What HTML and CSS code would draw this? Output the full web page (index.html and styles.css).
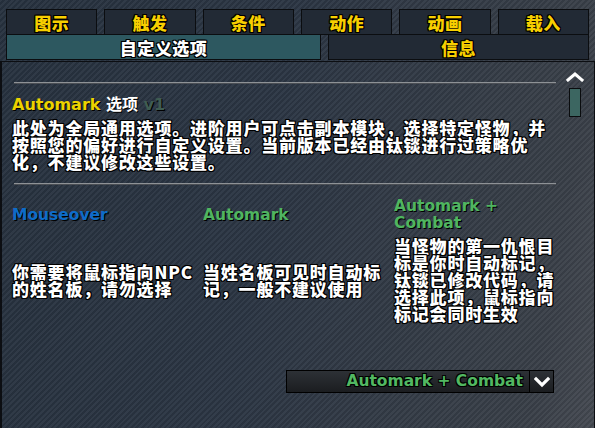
FILE: index.html
```html
<!DOCTYPE html>
<html>
<head>
<meta charset="utf-8">
<link rel="stylesheet" href="styles.css">
</head>
<body>
<div class="tabs top">
  <div class="tab">图示</div>
  <div class="tab">触发</div>
  <div class="tab">条件</div>
  <div class="tab">动作</div>
  <div class="tab">动画</div>
  <div class="tab">载入</div>
</div>
<div class="tabs sub">
  <div class="tab active">自定义选项</div>
  <div class="tab">信息</div>
</div>
<div class="panel">
  <div class="content">
    <div class="sep first"></div>
    <div class="title"><span class="yellow">Automark</span> 选项 <span class="ver">v1</span></div>
    <p class="desc">此处为全局通用选项。进阶用户可点击副本模块，选择特定怪物，并按照您的偏好进行自定义设置。当前版本已经由钛锬进行过策略优化，不建议修改这些设置。</p>
    <div class="sep"></div>
    <div class="grid">
      <div class="head blue">Mouseover</div>
      <div class="head green">Automark</div>
      <div class="head green">Automark + Combat</div>
      <div class="cell">你需要将鼠标指向NPC的姓名板，请勿选择</div>
      <div class="cell">当姓名板可见时自动标记，一般不建议使用</div>
      <div class="cell">当怪物的第一仇恨目标是你时自动标记，钛锬已修改代码，请选择此项，鼠标指向标记会同时生效</div>
    </div>
    <div class="dropdown">
      <div class="dd-value">Automark + Combat</div>
      <div class="dd-btn">
        <svg width="16" height="12" viewBox="0 0 16 12"><polyline points="2,3 8,9 14,3" fill="none" stroke="#fff" stroke-width="3.2" stroke-linecap="square"/></svg>
      </div>
    </div>
  </div>
  <div class="scroll">
    <svg class="up" width="18" height="10" viewBox="0 0 18 10"><polyline points="2,8 9,2 16,8" fill="none" stroke="#fff" stroke-width="3" stroke-linecap="square"/></svg>
    <div class="thumb"></div>
  </div>
</div>
</body>
</html>
```

FILE: styles.css
```css
html, body {
  margin: 0;
  padding: 0;
}
body {
  width: 595px;
  height: 428px;
  overflow: hidden;
  font-family: "DejaVu Sans", "Noto Sans CJK SC", sans-serif;
  font-weight: bold;
  color: #fff;
  background:
    repeating-linear-gradient(135deg, rgba(255,255,255,0.035) 0 2px, rgba(0,0,0,0.07) 2px 4px),
    linear-gradient(100deg, #27323f 0%, #2c3644 45%, #3a4049 90%, #454a52 100%);
}
.tabs {
  display: grid;
  margin-left: 6px;
  width: 583px;
}
.tabs.top {
  grid-template-columns: repeat(6, 1fr);
  column-gap: 7px;
  padding-top: 9px;
}
.tabs.sub {
  grid-template-columns: 315px 261px;
  column-gap: 7px;
  margin-top: -1px;
}
.tab {
  height: 24px;
  border: 1px solid #0b0d10;
  background: #222a35;
  color: #f7cf00;
  font-family: "Noto Sans CJK SC", sans-serif;
  font-weight: 900;
  font-size: 17px;
  letter-spacing: 0.5px;
  display: flex;
  align-items: center;
  justify-content: center;
  text-shadow: 1px 1px 0 #000, -1px -1px 0 #000, 1px -1px 0 #000, -1px 1px 0 #000, 0 1px 0 #000, 1px 0 0 #000, 0 -1px 0 #000, -1px 0 0 #000;
}
.tab.active {
  background: #2d5860;
  color: #fff;
}
.panel {
  margin-top: 1px;
  width: 592px;
  height: 366px;
  border: 1px solid #0c0e12;
  border-bottom: none;
  border-left-width: 2px;
  display: flex;
}
.content {
  width: 544px;
  padding-left: 10px;
  display: flex;
  flex-direction: column;
}
.sep {
  margin-left: 2px;
  border-top: 1px solid #8e9296;
  border-bottom: 1px solid #4a4e54;
  height: 0;
}
.sep.first {
  margin-top: 20px;
}
.title {
  margin-top: 12px;
  font-size: 16px;
  line-height: 18px;
  font-family: "DejaVu Sans", "Noto Sans CJK SC", sans-serif;
  text-shadow: 1px 1px 0 #000;
}
.title .yellow {
  color: #ecd300;
}
.title .ver {
  color: #3f5c52;
}
.desc, .cell {
  font-family: "Noto Sans CJK SC", sans-serif;
  font-weight: 900;
  font-size: 17px;
  letter-spacing: 0.8px;
  line-height: 17px;
  text-shadow: 1px 1px 0 #000, -1px -1px 0 #000, 1px -1px 0 #000, -1px 1px 0 #000, 0 1px 0 #000, 1px 0 0 #000, 0 -1px 0 #000, -1px 0 0 #000;
}
.desc {
  margin: 5px 0 13px;
}
.grid {
  display: grid;
  grid-template-columns: 185px 185px 165px;
  column-gap: 6px;
  row-gap: 5px;
  align-items: center;
  margin-top: 13px;
}
.head {
  font-size: 15.5px;
  line-height: 17px;
  height: 34px;
  display: flex;
  align-items: center;
  text-shadow: 1px 1px 0 #000;
}
.blue { color: #0d6cc9; }
.green { color: #4fb560; }
.dropdown {
  align-self: flex-end;
  margin-right: 2px;
  margin-top: 48px;
  width: 268px;
  height: 23px;
  display: flex;
}
.dd-value {
  flex: 1;
  border: 1px solid #000;
  background: linear-gradient(#2d3136, #1b1d20);
  color: #52b862;
  font-size: 15.5px;
  text-align: right;
  padding-right: 6px;
  line-height: 21px;
  text-shadow: 1px 1px 0 #000, -1px -1px 0 #000, 1px -1px 0 #000, -1px 1px 0 #000;
}
.dd-btn {
  width: 23px;
  border: 1px solid #000;
  border-left: none;
  background: linear-gradient(#2d3136, #1b1d20);
  display: flex;
  align-items: center;
  justify-content: center;
}
.scroll {
  margin-left: 10px;
  width: 18px;
  padding-top: 10px;
  display: flex;
  flex-direction: column;
  align-items: center;
}
.thumb {
  margin-top: 6px;
  width: 10px;
  height: 27px;
  border: 1px solid #0a0c0e;
  background: #3c6661;
}
```
